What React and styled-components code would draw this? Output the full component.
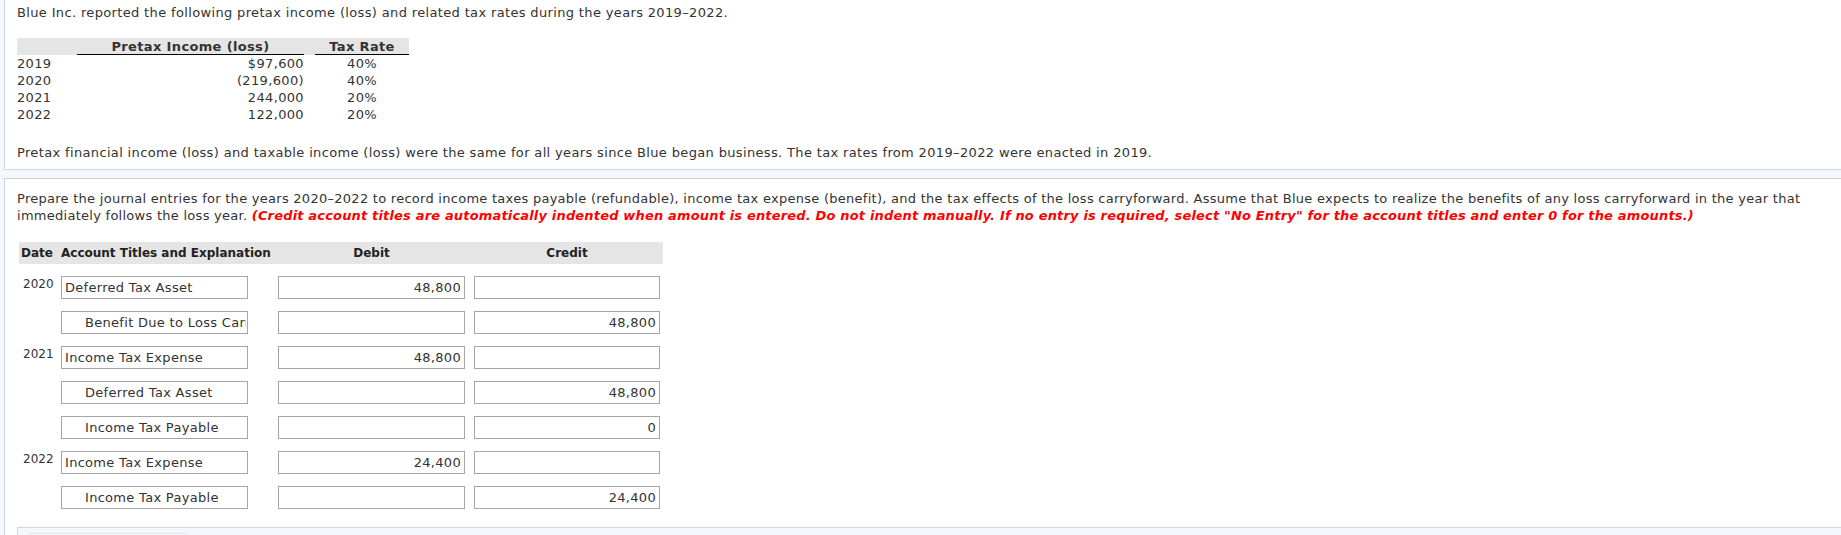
import React from 'react'
import styled, { createGlobalStyle } from 'styled-components'

const GlobalStyle = createGlobalStyle`
    html, body {
        margin: 0;
        padding: 0;
        background: #f5f7fa;
    }
    body {
        font-family: "DejaVu Sans", Verdana, sans-serif;
        font-size: 13px;
        letter-spacing: 0.35px;
        color: #333;
    }
`

const panelBorder = "#ccd5e0"

const Page = styled.div`
    padding-left: 4px;
    height: 535px;
    overflow: hidden;
`

const Panel = styled.section`
    background: #fff;
    border-left: 1px solid ${panelBorder};
    border-bottom: ${p => p.$closed ? `1px solid ${panelBorder}` : "none"};
    border-top: ${p => p.$top ? `1px solid ${panelBorder}` : "none"};
    margin-top: ${p => p.$top ? "8px" : "0"};
    padding: ${p => p.$top ? "11px 0 0 12px" : "4px 0 8px 12px"};
`

const Text = styled.p`
    margin: ${p => p.$gap || 0} 0 0 0;
    line-height: 17px;
    letter-spacing: ${p => p.$tight ? "0.27px" : "0.35px"};
`

const Warning = styled.span`
    color: #ff0000;
    font-weight: bold;
    font-style: italic;
    letter-spacing: 0.17px;
`

/* pretax income table */

const IncomeTable = styled.div`
    display: grid;
    grid-template-columns: 60px 227px 11px 94px;
    margin-top: 17px;
    line-height: 17px;
`

const HeadCell = styled.div`
    background: #e5e5e5;
    height: 16px;
    line-height: 17px;
    font-weight: bold;
    text-align: center;
    white-space: nowrap;
    border-bottom: 1px solid ${p => p.$rule ? "#000" : "#e5e5e5"};
`

const Cell = styled.div`
    text-align: ${p => p.$align || "left"};
`

/* journal */

const journalColumns = "42px 187px 30px 187px 9px 186px"

const JournalHead = styled.div`
    display: grid;
    grid-template-columns: ${journalColumns};
    width: 644px;
    box-sizing: border-box;
    padding-right: 3px;
    margin: 18px 0 0 2px;
    background: #e5e5e5;
    height: 22px;
    line-height: 22px;
    font-size: 12px;
    letter-spacing: 0;
    font-weight: bold;
    color: #222;
    white-space: nowrap;
`

const HeadLabel = styled.div`
    text-align: ${p => p.$align || "left"};
    padding-left: ${p => p.$pad || 0};
    grid-column: ${p => p.$col};
`

const JournalRow = styled.div`
    display: grid;
    grid-template-columns: ${journalColumns};
    margin: 12px 0 0 2px;
    height: 23px;
`

const Year = styled.div`
    font-size: 12px;
    letter-spacing: 0;
    line-height: 14px;
    padding: 1px 0 0 4px;
    color: #333;
`

const Field = styled.input`
    box-sizing: border-box;
    width: 100%;
    height: 23px;
    margin: 0;
    border: 1px solid #a6a6a6;
    border-radius: 0;
    background: #fff;
    font-family: "DejaVu Sans", Verdana, sans-serif;
    font-size: 13px;
    letter-spacing: 0.3px;
    color: #333;
    padding: 0 ${p => p.$amount ? "3px" : "1px"} 0 ${p => p.$indent ? "23px" : "3px"};
    text-align: ${p => p.$amount ? "right" : "left"};
    outline: none;
    grid-column: ${p => p.$col};
`

const Footer = styled.div`
    margin-top: 18px;
    height: 40px;
    background: #f3f6fa;
    border-top: 1px solid ${panelBorder};
    border-left: 1px solid ${panelBorder};
    padding: 5px 0 0 10px;
`

const FooterTab = styled.div`
    width: 157px;
    height: 20px;
    background: #f8fafc;
    border: 1px solid #dfe4eb;
    border-radius: 2px;
`

const incomes = [
    ["2019", "$97,600", "40%"],
    ["2020", "(219,600)", "40%"],
    ["2021", "244,000", "20%"],
    ["2022", "122,000", "20%"]
]

const entries = [
    { year: "2020", account: "Deferred Tax Asset", debit: "48,800", credit: "" },
    { account: "Benefit Due to Loss Carryforward", credit: "48,800", indent: true },
    { year: "2021", account: "Income Tax Expense", debit: "48,800", credit: "" },
    { account: "Deferred Tax Asset", credit: "48,800", indent: true },
    { account: "Income Tax Payable", credit: "0", indent: true },
    { year: "2022", account: "Income Tax Expense", debit: "24,400", credit: "" },
    { account: "Income Tax Payable", credit: "24,400", indent: true }
]

export default function App() {
    return <React.Fragment>
        <GlobalStyle />
        <Page>
            <Panel $closed>
                <Text>Blue Inc. reported the following pretax income (loss) and related tax rates during the years 2019–2022.</Text>
                <IncomeTable>
                    <HeadCell />
                    <HeadCell $rule>Pretax Income (loss)</HeadCell>
                    <HeadCell />
                    <HeadCell $rule>Tax Rate</HeadCell>
                    {incomes.map(([year, amount, rate]) => <React.Fragment key={year}>
                        <Cell>{year}</Cell>
                        <Cell $align="right">{amount}</Cell>
                        <Cell />
                        <Cell $align="center">{rate}</Cell>
                    </React.Fragment>)}
                </IncomeTable>
                <Text $gap="21px">Pretax financial income (loss) and taxable income (loss) were the same for all years since Blue began business. The tax rates from 2019–2022 were enacted in 2019.</Text>
            </Panel>
            <Panel $top>
                <Text $tight>
                    Prepare the journal entries for the years 2020–2022 to record income taxes payable (refundable), income tax expense (benefit), and the tax effects of the loss carryforward. Assume that Blue expects to realize the benefits of any loss carryforward in the year that immediately follows the loss year. <Warning>(Credit account titles are automatically indented when amount is entered. Do not indent manually. If no entry is required, select "No Entry" for the account titles and enter 0 for the amounts.)</Warning>
                </Text>
                <JournalHead>
                    <HeadLabel $col={1} $pad="2px">Date</HeadLabel>
                    <HeadLabel $col={2}>Account Titles and Explanation</HeadLabel>
                    <HeadLabel $col={4} $align="center">Debit</HeadLabel>
                    <HeadLabel $col={6} $align="center">Credit</HeadLabel>
                </JournalHead>
                {entries.map((e, i) => <JournalRow key={i}>
                    <Year>{e.year}</Year>
                    <Field $col={2} $indent={e.indent} readOnly value={e.account} />
                    <Field $col={4} $amount readOnly value={e.debit || ""} />
                    <Field $col={6} $amount readOnly value={e.credit} />
                </JournalRow>)}
                <Footer>
                    <FooterTab />
                </Footer>
            </Panel>
        </Page>
    </React.Fragment>
}
